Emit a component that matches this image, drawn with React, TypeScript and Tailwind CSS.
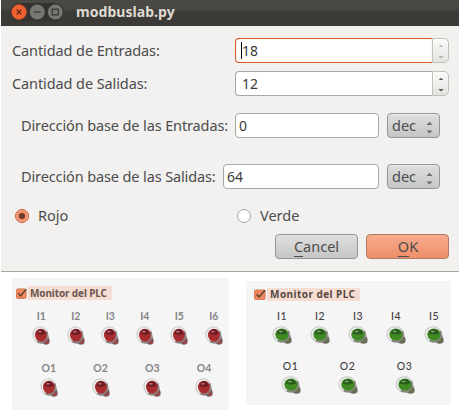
import React from 'react';

type Tone = 'red' | 'green';

const tones = {
  red: { base: '#a82c30', dark: '#6f1c24', light: '#c98a90', shade: '#96494c' },
  green: { base: '#3f8a22', dark: '#285c1c', light: '#8fb880', shade: '#66704f' },
};

function Led({ tone }: { tone: Tone }) {
  const c = tones[tone];
  const green = tone === 'green';
  return (
    <svg
      className={green ? 'block h-[18px] w-5' : 'block h-[19px] w-[18px]'}
      viewBox="0 0 20 19"
      preserveAspectRatio="none"
    >
      <path d="M15.5 4 Q18.6 7 18.4 11 Q20.4 14 19.2 17.4 Q15.5 20 11.8 17.4 Q7 18 4 15 Z" fill="#77706d" />
      <ellipse cx="16" cy="15.2" rx="3" ry="2.9" fill={c.shade} />
      <ellipse cx="9.2" cy="8.7" rx="8.2" ry="8" fill="#f0f0f0" stroke="#c6c6c4" strokeWidth="1.1" />
      <path d="M6 15.4 Q9.5 17.4 14.1 14.8 Q17.6 11.5 16.4 5.5" fill="none" stroke="#85807d" strokeWidth="2" />
      <ellipse cx="9.9" cy="9.1" rx="6.6" ry="6.4" fill={c.base} />
      <path d="M4.7 7.8 Q6 3.1 10 3.1 Q14 3.2 15.2 7.8 Q10 10.1 4.7 7.8 Z" fill={c.dark} />
      <ellipse cx="8.8" cy="5.8" rx="2" ry="1" fill={c.light} opacity="0.7" />
    </svg>
  );
}

function Lamp({ name, tone }: { name: string; tone: Tone }) {
  return (
    <div className="flex flex-col items-center font-['Lato','Open_Sans',sans-serif]">
      <span
        className={
          tone === 'red'
            ? 'h-[13px] text-[10.5px] leading-[13px] font-bold text-[#858588]'
            : 'h-[13px] text-[10.5px] leading-[13px] font-medium tracking-[0.4px] text-[#3f3c3a]'
        }
      >
        {name}
      </span>
      <div className="mt-[3px]">
        <Led tone={tone} />
      </div>
    </div>
  );
}

function Check({ className }: { className: string }) {
  return (
    <svg className={className} viewBox="0 0 11 11" preserveAspectRatio="none">
      <rect x="0.5" y="0.9" width="9.6" height="9.6" rx="1.5" fill="#f0895f" stroke="#d97a55" />
      <path d="M2.3 5.3 L4.6 8 L10.2 1.2" fill="none" stroke="#5b4034" strokeWidth="1.4" />
    </svg>
  );
}

function Arrows({ color, className }: { color: string; className: string }) {
  return (
    <svg className={className} viewBox="0 0 6 15">
      <path d="M0.6 3 L3 0.8 L5.4 3 Z M0.2 12 L3 14.6 L5.8 12 Z" fill={color} />
    </svg>
  );
}

function Spin({ value, focused }: { value: string; focused?: boolean }) {
  return (
    <div className="flex h-[25px] w-[214px] tracking-normal">
      <div
        className={
          focused
            ? 'flex w-[197px] items-center rounded-l-[4px] border border-r-0 border-[#d5592b] bg-white pl-[5px] shadow-[inset_0_0_1px_#e9a184]'
            : 'flex w-[197px] items-center rounded-l-[4px] border border-r-0 border-[#aaa8a5] bg-white pl-[5px]'
        }
      >
        <span className={focused ? 'h-[17px] w-px bg-black' : 'h-[17px] w-px'} />
        <span className="text-[14px] text-[#3c3b37]">{value}</span>
      </div>
      <div className="flex w-[17px] items-center justify-center rounded-r-[5px] border border-[#c3c0bc] bg-gradient-to-b from-[#fbfbfa] to-[#e4e3e1]">
        <Arrows className="mt-px h-[15px] w-[6px]" color={focused ? '#b9b7b4' : '#5c5b58'} />
      </div>
    </div>
  );
}

function Combo() {
  return (
    <div className="ml-2 flex h-[25px] w-[53px] items-center justify-between rounded-[4px] border border-[#979592] bg-gradient-to-b from-[#dedede] to-[#c6c6c6] pr-[6px] pl-1 tracking-normal shadow-[inset_0_1px_0_#ececec]">
      <span className="text-[14.5px] text-[#4c4c4c]">dec</span>
      <svg className="mt-[3px] h-[13px] w-[7px]" viewBox="0 0 7 13">
        <path d="M0.5 4 L3.5 0.8 L6.5 4 Z M0.5 9.6 L3.5 12.6 L6.5 9.6 Z" fill="#6b6b6b" />
      </svg>
    </div>
  );
}

function Field({ value, className }: { value: string; className: string }) {
  return (
    <div className={`flex h-[25px] items-center rounded-[4px] border border-[#a9a7a4] bg-white pl-[3px] text-[14px] tracking-normal text-[#3c3b37] ${className}`}>
      {value}
    </div>
  );
}

export default function App() {
  return (
    <div className="h-[413px] w-[459px] overflow-hidden bg-white font-['Noto_Sans','Open_Sans',sans-serif] whitespace-nowrap">
      <div className="ml-px h-[272px] border-b border-[#a8a79f] bg-[#f2f1ef] text-[14.5px] text-[#4c4c4c]">
        <div className="flex h-[26px] items-center bg-gradient-to-b from-[#4a4843] from-30% to-[#3b3a36] to-50% pb-[3px] pl-[9px]">
          <div className="flex h-[18px] w-[54px] items-center gap-px rounded-full bg-[#34332f] pl-px">
            <svg className="h-4 w-[52px]" viewBox="0 0 52 16">
              <circle cx="8" cy="8" r="7.4" fill="#ee6231" stroke="#c54f23" strokeWidth="0.7" />
              <path d="M5.7 5.7 L10.3 10.3 M10.3 5.7 L5.7 10.3" stroke="#522313" strokeWidth="1.2" />
              <circle cx="26.3" cy="8" r="7.5" fill="#777670" />
              <path d="M22.8 8 H29.8" stroke="#383733" strokeWidth="1.2" />
              <circle cx="44.3" cy="8" r="7.5" fill="#777670" />
              <rect x="41.3" y="5.2" width="6" height="5.8" fill="none" stroke="#383733" strokeWidth="1.2" />
            </svg>
          </div>
          <span className="ml-[12px] text-[14px] leading-5 font-bold tracking-[0.05px] text-[#dfdbd2]">modbuslab.py</span>
        </div>
        <div className="mt-3 flex h-[25px] items-center pl-[11px]">
          <span className="w-[223px] tracking-[-0.1px]">Cantidad de Entradas:</span>
          <Spin value="18" focused />
        </div>
        <div className="mt-2 flex h-[25px] items-center pl-[11px]">
          <span className="w-[223px] tracking-[-0.1px]">Cantidad de Salidas:</span>
          <Spin value="12" />
        </div>
        <div className="mt-[17px] flex h-[25px] items-center pl-5">
          <span className="w-[214px] tracking-[-0.12px]">Dirección base de las Entradas:</span>
          <Field value="0" className="w-36" />
          <Combo />
        </div>
        <div className="mt-[26px] flex h-[25px] items-center pl-5">
          <span className="w-[202px] tracking-[-0.12px]">Dirección base de las Salidas:</span>
          <Field value="64" className="w-[156px]" />
          <Combo />
        </div>
        <div className="mt-[17px] flex h-5 items-center pl-[14px]">
          <span className="flex size-[14px] items-center justify-center rounded-full border border-[#c65b38] bg-[#f18a62] shadow-[inset_0_0_0_1px_#f8b498]">
            <span className="size-[6px] rounded-full bg-[#6b3a2a]" />
          </span>
          <span className="ml-[9px] w-[199px]">Rojo</span>
          <span className="size-[14px] rounded-full border border-[#a9a7a4] bg-white" />
          <span className="ml-[9px]">Verde</span>
        </div>
        <div className="mt-2 flex h-[25px] gap-2 pl-[274px]">
          <div className="flex w-[83px] items-center justify-center rounded-[4px] border border-[#979592] bg-gradient-to-b from-[#dfdfdf] to-[#c6c6c6]">
            <span><span className="underline decoration-1 underline-offset-[4px]">C</span>ancel</span>
          </div>
          <div className="flex w-[83px] items-center justify-center rounded-[4px] border border-[#b07a65] bg-gradient-to-b from-[#f7ac8d] to-[#ed8e68] pl-px">
            <span><span className="underline decoration-1 underline-offset-[4px]">O</span>K</span>
          </div>
        </div>
      </div>

      <div className="flex items-start">
        <div className="mt-[6px] ml-3 h-[132px] w-[217px] bg-[#f5f5f5]">
          <div className="flex h-[22px] items-end pl-1">
            <Check className="mb-[1px] size-[11px]" />
            <span className="ml-px h-[14px] w-[84px] bg-[#f6ddd3] pl-[2px] text-[10px] leading-[14px] font-bold tracking-[-0.12px] text-[#6a5650]">Monitor del PLC</span>
          </div>
          <div className="mt-[10px] ml-[12px] grid w-[207px] grid-cols-6">
            {['I1', 'I2', 'I3', 'I4', 'I5', 'I6'].map((n) => <Lamp key={n} name={n} tone="red" />)}
          </div>
          <div className="mt-[17px] ml-[11px] grid w-[207px] grid-cols-4">
            {['O1', 'O2', 'O3', 'O4'].map((n) => <Lamp key={n} name={n} tone="red" />)}
          </div>
        </div>
        <div className="mt-[9px] ml-[17px] h-[124px] w-[205px] bg-[#f5f5f5]">
          <div className="flex h-5 items-end pl-2">
            <Check className="mb-[1px] h-[11px] w-[12px]" />
            <span className="ml-px h-[13px] w-[93px] bg-[#f6ddd3] pl-[3px] text-[10px] leading-[13px] font-bold tracking-[0.45px] text-[#544840]">Monitor del PLC</span>
          </div>
          <div className="mt-[9px] ml-[17px] grid w-[190px] grid-cols-5">
            {['I1', 'I2', 'I3', 'I4', 'I5'].map((n) => <Lamp key={n} name={n} tone="green" />)}
          </div>
          <div className="mt-[16px] ml-[16px] grid w-[171px] grid-cols-3">
            {['O1', 'O2', 'O3'].map((n) => <Lamp key={n} name={n} tone="green" />)}
          </div>
        </div>
      </div>
    </div>
  );
}
